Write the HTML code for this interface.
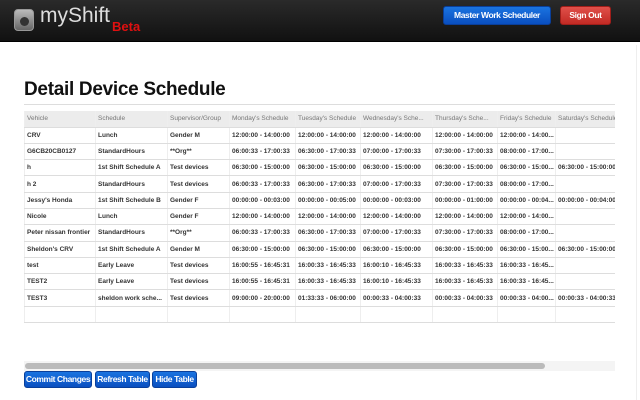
<!DOCTYPE html>
<html><head><meta charset="utf-8"><style>
*{margin:0;padding:0;box-sizing:border-box}
body{width:640px;height:400px;overflow:hidden;background:#fff;font-family:"Liberation Sans",Arial,sans-serif;position:relative}
.hdr{position:absolute;left:0;top:0;width:640px;height:42px;background:linear-gradient(#2a2a2a,#111);border-bottom:1px solid #000}
.logo{position:absolute;left:14px;top:9px;width:20px;height:22px;border-radius:4px;background:linear-gradient(#bbb,#666);border:1px solid #999}
.logo:after{content:"";position:absolute;left:5px;top:7px;width:9px;height:9px;border-radius:50%;background:#333}
.brand{position:absolute;left:40px;top:4px;color:#ddd;font-size:21px}
.beta{position:absolute;left:112px;top:19px;color:#e01010;font-size:13px;font-weight:bold}
.btn{position:absolute;color:#fff;font-size:8.5px;font-weight:bold;text-align:center;border-radius:3px;letter-spacing:-0.4px;white-space:nowrap;overflow:hidden}
.blue{background:linear-gradient(#1a73e0,#0a4fc0);border:1px solid #0a3f9a}
.red{background:linear-gradient(#e0504a,#c22a24);border:1px solid #a01e1a}
h1{position:absolute;left:24px;top:79px;font-size:19px;font-weight:bold;color:#111;letter-spacing:-0.3px}
.rule{position:absolute;left:24px;top:104px;width:591px;height:1px;background:#ddd}
table{position:absolute;left:24px;top:111px;border-collapse:collapse;table-layout:fixed;width:600px}
td{height:16.3px;font-size:6.5px;color:#333;border-bottom:1px solid #ddd;border-left:1px solid #eee;padding-left:2px;white-space:nowrap;overflow:hidden;font-weight:bold}
tr.h td{background:#ececec;color:#777;font-weight:normal;height:16px}
.wrap{position:absolute;left:24px;top:111px;width:591px;height:215px;overflow:hidden}
.wrap table{left:0;top:0}
</style></head><body>
<div class="hdr"><div class="logo"></div><div class="brand">myShift</div><div class="beta">Beta</div>
<div class="btn blue" style="left:443px;top:6px;width:108px;height:19px;line-height:17px">Master Work Scheduler</div>
<div class="btn red" style="left:560px;top:6px;width:51px;height:19px;line-height:17px">Sign Out</div></div>
<h1>Detail Device Schedule</h1>
<div class="rule"></div>
<div style="position:absolute;left:636px;top:45px;width:1px;height:355px;background:#eee"></div>
<div class="wrap"><table>
<colgroup><col style="width:71px"><col style="width:72px"><col style="width:62px"><col style="width:66px"><col style="width:65px"><col style="width:72px"><col style="width:65px"><col style="width:58px"><col style="width:69px"></colgroup>
<tr class="h"><td>Vehicle</td><td>Schedule</td><td>Supervisor/Group</td><td>Monday's Schedule</td><td>Tuesday's Schedule</td><td>Wednesday's Sche...</td><td>Thursday's Sche...</td><td>Friday's Schedule</td><td>Saturday's Schedule</td></tr>
<tr><td>CRV</td><td>Lunch</td><td>Gender M</td><td>12:00:00 - 14:00:00</td><td>12:00:00 - 14:00:00</td><td>12:00:00 - 14:00:00</td><td>12:00:00 - 14:00:00</td><td>12:00:00 - 14:00...</td><td></td></tr>
<tr><td>G6CB20CB0127</td><td>StandardHours</td><td>**Org**</td><td>06:00:33 - 17:00:33</td><td>06:30:00 - 17:00:33</td><td>07:00:00 - 17:00:33</td><td>07:30:00 - 17:00:33</td><td>08:00:00 - 17:00...</td><td></td></tr>
<tr><td>h</td><td>1st Shift Schedule A</td><td>Test devices</td><td>06:30:00 - 15:00:00</td><td>06:30:00 - 15:00:00</td><td>06:30:00 - 15:00:00</td><td>06:30:00 - 15:00:00</td><td>06:30:00 - 15:00...</td><td>06:30:00 - 15:00:00</td></tr>
<tr><td>h 2</td><td>StandardHours</td><td>Test devices</td><td>06:00:33 - 17:00:33</td><td>06:30:00 - 17:00:33</td><td>07:00:00 - 17:00:33</td><td>07:30:00 - 17:00:33</td><td>08:00:00 - 17:00...</td><td></td></tr>
<tr><td>Jessy's Honda</td><td>1st Shift Schedule B</td><td>Gender F</td><td>00:00:00 - 00:03:00</td><td>00:00:00 - 00:05:00</td><td>00:00:00 - 00:03:00</td><td>00:00:00 - 01:00:00</td><td>00:00:00 - 00:04...</td><td>00:00:00 - 00:04:00</td></tr>
<tr><td>Nicole</td><td>Lunch</td><td>Gender F</td><td>12:00:00 - 14:00:00</td><td>12:00:00 - 14:00:00</td><td>12:00:00 - 14:00:00</td><td>12:00:00 - 14:00:00</td><td>12:00:00 - 14:00...</td><td></td></tr>
<tr><td>Peter nissan frontier</td><td>StandardHours</td><td>**Org**</td><td>06:00:33 - 17:00:33</td><td>06:30:00 - 17:00:33</td><td>07:00:00 - 17:00:33</td><td>07:30:00 - 17:00:33</td><td>08:00:00 - 17:00...</td><td></td></tr>
<tr><td>Sheldon's CRV</td><td>1st Shift Schedule A</td><td>Gender M</td><td>06:30:00 - 15:00:00</td><td>06:30:00 - 15:00:00</td><td>06:30:00 - 15:00:00</td><td>06:30:00 - 15:00:00</td><td>06:30:00 - 15:00...</td><td>06:30:00 - 15:00:00</td></tr>
<tr><td>test</td><td>Early Leave</td><td>Test devices</td><td>16:00:55 - 16:45:31</td><td>16:00:33 - 16:45:33</td><td>16:00:10 - 16:45:33</td><td>16:00:33 - 16:45:33</td><td>16:00:33 - 16:45...</td><td></td></tr>
<tr><td>TEST2</td><td>Early Leave</td><td>Test devices</td><td>16:00:55 - 16:45:31</td><td>16:00:33 - 16:45:33</td><td>16:00:10 - 16:45:33</td><td>16:00:33 - 16:45:33</td><td>16:00:33 - 16:45...</td><td></td></tr>
<tr><td>TEST3</td><td>sheldon work sche...</td><td>Test devices</td><td>09:00:00 - 20:00:00</td><td>01:33:33 - 06:00:00</td><td>00:00:33 - 04:00:33</td><td>00:00:33 - 04:00:33</td><td>00:00:33 - 04:00...</td><td>00:00:33 - 04:00:33</td></tr>
<tr><td></td><td></td><td></td><td></td><td></td><td></td><td></td><td></td><td></td></tr>
</table></div>
<div style="position:absolute;left:24px;top:361px;width:591px;height:10px;background:#f4f4f4"></div>
<div style="position:absolute;left:25px;top:363px;width:520px;height:6px;background:#bbb;border-radius:3px"></div>
<div class="btn blue" style="left:24px;top:371px;width:68px;height:17px;line-height:15px">Commit Changes</div>
<div class="btn blue" style="left:95px;top:371px;width:55px;height:17px;line-height:15px">Refresh Table</div>
<div class="btn blue" style="left:152px;top:371px;width:45px;height:17px;line-height:15px">Hide Table</div>
</body></html>
